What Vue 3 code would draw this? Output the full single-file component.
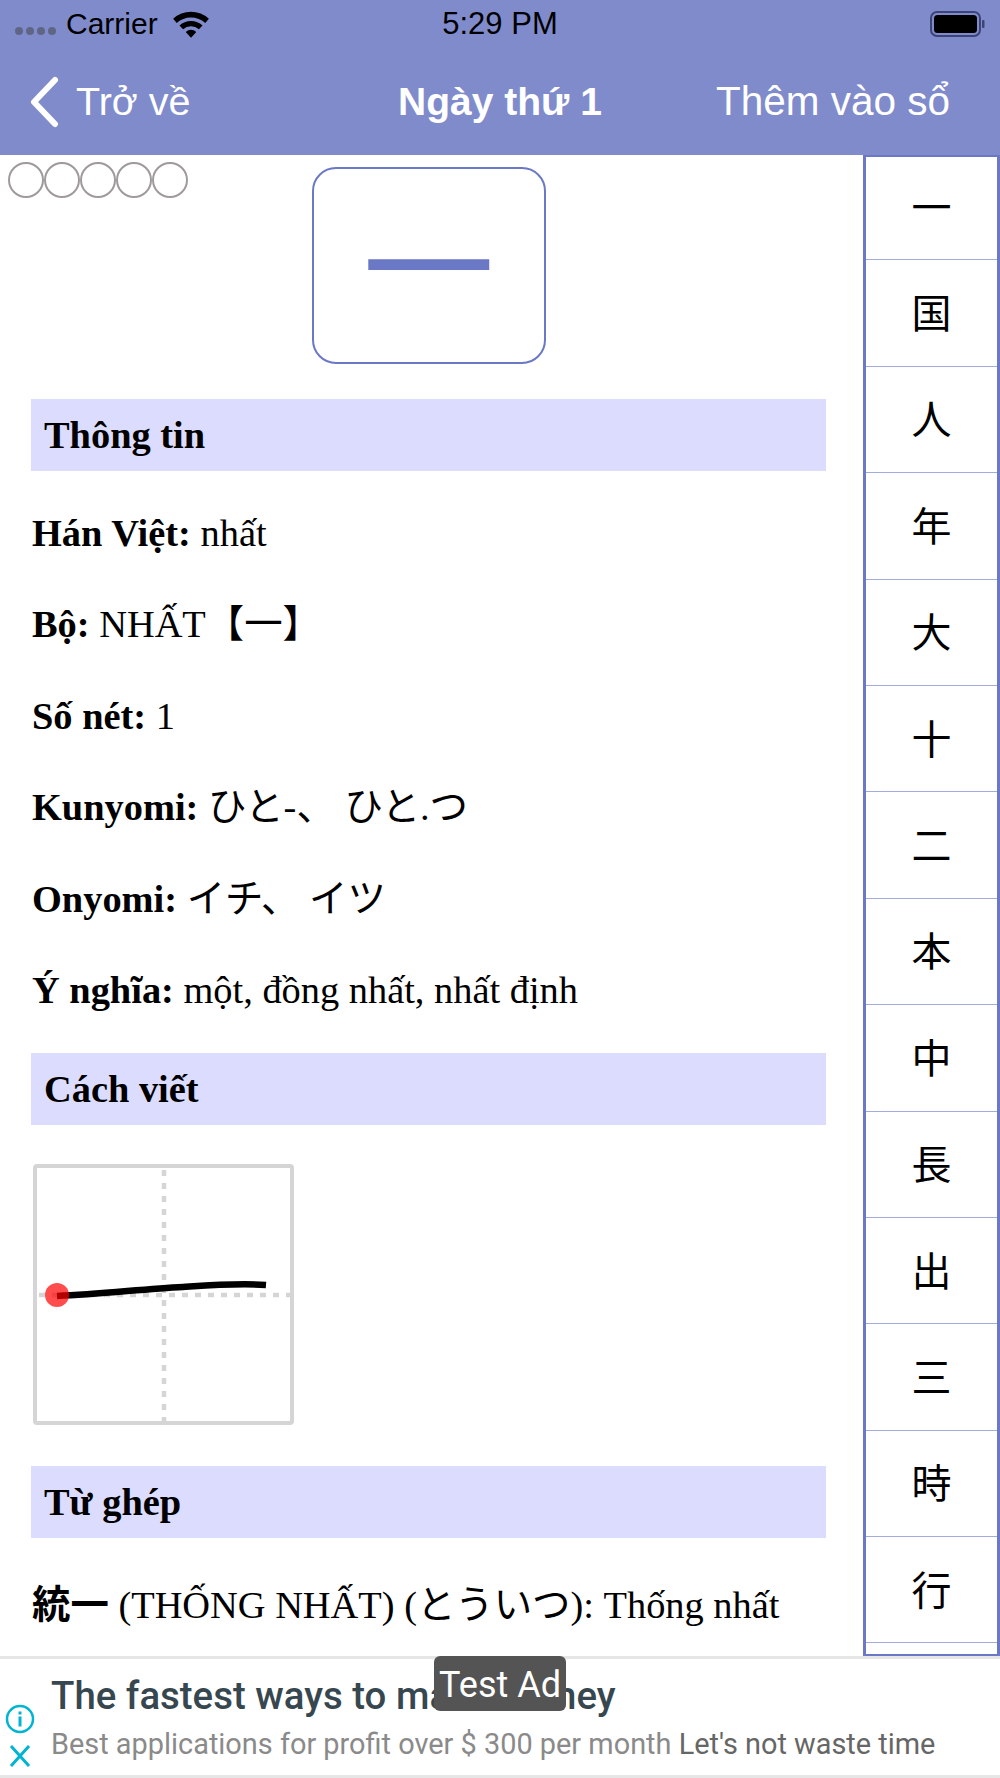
<script setup>
const kanji = ['一', '国', '人', '年', '大', '十', '二', '本', '中', '長', '出', '三', '時', '行', '']
const infoRows = [
  { label: 'Hán Việt:', value: 'nhất' },
  { label: 'Bộ:', value: 'NHẤT【一】' },
  { label: 'Số nét:', value: '1' },
  { label: 'Kunyomi:', value: 'ひと-、 ひと.つ' },
  { label: 'Onyomi:', value: 'イチ、 イツ' },
  { label: 'Ý nghĩa:', value: 'một, đồng nhất, nhất định' }
]
</script>

<template>
  <div class="screen">
    <header class="header">
      <div class="status">
        <div class="statusLeft">
          <span class="signal"><i></i><i></i><i></i><i></i></span>
          <span class="carrier">Carrier</span>
          <svg class="wifi" width="40" height="30" viewBox="0 0 38 28">
            <path d="M2 9 A25 25 0 0 1 36 9 L32.5 13 A20 20 0 0 0 5.500 13 Z" fill="#000" />
            <path d="M8 15.500 A16 16 0 0 1 30 15.500 L26.500 19 A11 11 0 0 0 11.500 19 Z" fill="#000" />
            <path d="M14 21.500 A7 7 0 0 1 24 21.500 L19 27 Z" fill="#000" />
          </svg>
        </div>
        <span class="time">5:29 PM</span>
        <svg class="battery" width="56" height="28" viewBox="0 0 56 28">
          <rect x="1" y="2" width="49" height="24" rx="6" fill="none" stroke="#3d4476" stroke-width="2" />
          <rect x="4" y="5" width="43" height="18" rx="3.500" fill="#000" />
          <rect x="52" y="10" width="2.500" height="8" rx="1" fill="#3d4476" />
        </svg>
      </div>
      <nav class="nav">
        <div class="back">
          <svg width="32" height="52" viewBox="0 0 32 52">
            <path d="M27 4 L6 26 L27 48" fill="none" stroke="#fff" stroke-width="6" stroke-linecap="round" stroke-linejoin="round" />
          </svg>
          <span>Trở về</span>
        </div>
        <h1 class="navTitle">Ngày thứ 1</h1>
        <span class="navAction">Thêm vào sổ</span>
      </nav>
    </header>

    <div class="body">
      <main class="content">
        <div class="top">
          <div class="stars"><span v-for="n in 5" :key="n" class="star"></span></div>
          <div class="kanjiCard">一</div>
        </div>

        <h2 class="band">Thông tin</h2>
        <p v-for="row in infoRows" :key="row.label" class="info">
          <b>{{ row.label }}</b> {{ row.value }}
        </p>

        <h2 class="band">Cách viết</h2>
        <svg class="stroke" width="261" height="261" viewBox="0 0 261 261">
          <rect x="2" y="2" width="257" height="257" rx="2" fill="#fff" stroke="#d5d5d5" stroke-width="4" />
          <path d="M131 6 V257 M6 131 H257" stroke="#d5d5d5" stroke-width="4.500" stroke-dasharray="6 7" fill="none" />
          <path d="M24 132 C70 130 110 125 150 123 C180 121 205 119 233 121" fill="none" stroke="#000" stroke-width="6.500" />
          <circle cx="24" cy="131" r="12" fill="#f00" fill-opacity="0.7" />
        </svg>

        <h2 class="band">Từ ghép</h2>
        <p class="info compound"><b>統一</b> (THỐNG NHẤT) (とういつ): Thống nhất</p>
      </main>

      <aside class="sidebar">
        <div class="kanjiList">
          <div v-for="(k, i) in kanji" :key="i" class="kanjiRow">{{ k }}</div>
        </div>
      </aside>
    </div>

    <footer class="ad">
      <div class="adIcons">
        <svg width="30" height="30" viewBox="0 0 30 30">
          <circle cx="15" cy="15" r="13" fill="none" stroke="#00b4d2" stroke-width="2.500" />
          <rect x="13.500" y="12.500" width="3" height="10" fill="#00b4d2" />
          <rect x="13.500" y="7.500" width="3" height="3" fill="#00b4d2" />
        </svg>
        <svg width="22" height="22" viewBox="0 0 22 22">
          <path d="M2 1 L20 21 M20 1 L2 21" stroke="#00b4d2" stroke-width="3" fill="none" />
        </svg>
      </div>
      <div class="adText">
        <div class="adTitle">The fastest ways to make money</div>
        <div class="adSub">Best applications for profit over $ 300 per month <span>Let's not waste time</span></div>
      </div>
      <div class="testAd">Test Ad</div>
    </footer>
  </div>
</template>

<style scoped>
.screen {
  width: 1000px;
  height: 1778px;
  display: flex;
  flex-direction: column;
  overflow: hidden;
  background: #fff;
  font-family: "Liberation Serif", "Noto Sans CJK JP", serif;
  color: #000;
}
.header {
  height: 155px;
  flex-shrink: 0;
  background: #808bcc;
  font-family: "Liberation Sans", sans-serif;
  box-sizing: border-box;
}
.status {
  height: 48px;
  display: flex;
  align-items: center;
  justify-content: space-between;
  padding: 0 14px 0 15px;
  position: relative;
}
.statusLeft {
  display: flex;
  align-items: center;
}
.signal {
  display: flex;
  gap: 3px;
  margin-top: 14px;
  margin-right: 10px;
}
.signal i {
  width: 8px;
  height: 8px;
  border-radius: 50%;
  background: #5f6685;
}
.carrier {
  font-size: 30px;
  color: #000;
}
.wifi {
  margin-left: 13px;
}
.time {
  position: absolute;
  left: 0;
  right: 0;
  text-align: center;
  font-size: 31px;
  color: #000;
}
.nav {
  height: 107px;
  display: flex;
  align-items: center;
  justify-content: space-between;
  color: #fff;
  font-size: 40px;
  padding: 0 50px 0 28px;
  position: relative;
}
.back {
  display: flex;
  align-items: center;
  gap: 16px;
  font-size: 39.500px;
}
.navTitle {
  position: absolute;
  left: 0;
  right: 0;
  margin: 0;
  text-align: center;
  font-size: 39px;
  font-weight: bold;
}
.navAction {
  font-size: 40.500px;
}
.body {
  flex: 1;
  min-height: 0;
  display: flex;
}
.content {
  flex: 1;
  min-width: 0;
  padding: 0 37px 0 31px;
  overflow: hidden;
}
.top {
  position: relative;
  padding-top: 12px;
  display: flex;
  justify-content: center;
}
.stars {
  position: absolute;
  left: -23px;
  top: 7px;
  display: flex;
}
.star {
  width: 36px;
  height: 36px;
  box-sizing: border-box;
  border: 2px solid #a09a9a;
  border-radius: 50%;
}
.kanjiCard {
  width: 234px;
  height: 197px;
  box-sizing: border-box;
  border: 2px solid #6a78c5;
  border-radius: 24px;
  background: #fff;
  color: #6a78c5;
  display: flex;
  align-items: center;
  justify-content: center;
  padding-bottom: 13px;
  font-family: "Noto Sans CJK JP", sans-serif;
  font-size: 132px;
  line-height: 1;
}
.band {
  margin: 35px 0 0;
  height: 72px;
  padding-left: 13px;
  display: flex;
  align-items: center;
  background: #dcdcff;
  font-size: 38.400px;
  font-weight: bold;
}
.info {
  margin: 40px 0 0 1px;
  font-size: 38.400px;
  line-height: 44px;
  white-space: nowrap;
}
.info + .info {
  margin-top: 47.400px;
}
.info + .band {
  margin-top: 41px;
}
.info.compound {
  margin-top: 45px;
}
.stroke {
  display: block;
  margin-top: 39px;
  margin-left: 2px;
}
.stroke + .band {
  margin-top: 41px;
}
.sidebar {
  width: 137px;
  flex-shrink: 0;
  box-sizing: border-box;
  height: 1502px;
  border: 3px solid #6a78c5;
  border-top-width: 2px;
  overflow: hidden;
}
.kanjiList {
  margin-top: -3px;
}
.kanjiRow {
  height: 106.400px;
  box-sizing: border-box;
  border-bottom: 1.500px solid #a3abdd;
  padding-bottom: 4px;
  display: flex;
  align-items: center;
  justify-content: center;
  font-family: "Noto Sans CJK JP", sans-serif;
  font-size: 40px;
}
.ad {
  position: relative;
  height: 122px;
  flex-shrink: 0;
  box-sizing: border-box;
  border: 3px solid #e6e6e6;
  border-width: 3px 0;
  display: flex;
  font-family: Roboto, "Liberation Sans", sans-serif;
}
.adIcons {
  width: 51px;
  flex-shrink: 0;
  display: flex;
  flex-direction: column;
  align-items: center;
  justify-content: flex-end;
  gap: 11px;
  padding: 0 15px 8px 4px;
  box-sizing: border-box;
}
.adText {
  padding-top: 14px;
  white-space: nowrap;
}
.adTitle {
  font-size: 38.400px;
  font-weight: 500;
  line-height: 45px;
  color: #37474f;
}
.adSub {
  margin-top: 9px;
  font-size: 28.900px;
  line-height: 34px;
  color: #8a8a8a;
}
.adSub span {
  color: #666;
}
.testAd {
  position: absolute;
  left: 434px;
  top: -3px;
  width: 132px;
  height: 55px;
  border-radius: 6px;
  background: #545454;
  color: #fff;
  display: flex;
  align-items: center;
  justify-content: center;
  padding-top: 2px;
  box-sizing: border-box;
  font-size: 36px;
}
</style>
